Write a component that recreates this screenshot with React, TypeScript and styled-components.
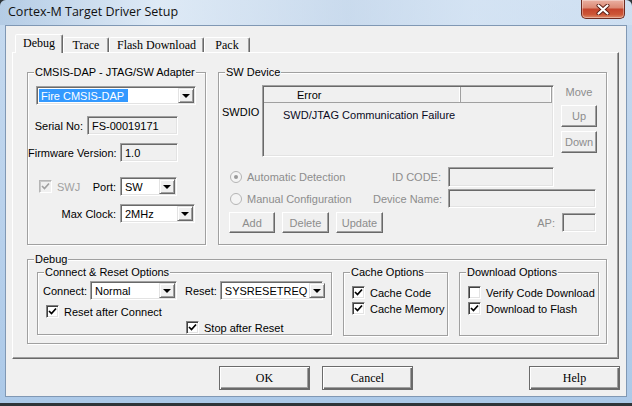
import React from 'react';
import styled, { createGlobalStyle } from 'styled-components';

const GlobalStyle = createGlobalStyle`
  html, body {
    margin: 0;
    padding: 0;
    background: #2f3539;
  }
  body {
    font-family: "Liberation Sans", Arial, sans-serif;
    font-size: 11px;
    color: #000;
  }
  * { box-sizing: border-box; }
`;

const Window = styled.div`
  width: 632px;
  height: 403px;
  display: flex;
  flex-direction: column;
  border-radius: 6px 6px 0 0;
  overflow: hidden;
  background: linear-gradient(180deg, #c6daef 0%, #bad2ec 50%, #acc9e8 100%);
`;

const TitleBar = styled.div`
  height: 25px;
  flex: none;
  display: flex;
  align-items: flex-start;
  padding-left: 8px;
  background: linear-gradient(90deg, rgba(150,180,212,0.35) 0%, rgba(230,239,248,0.75) 25%, rgba(204,219,236,0.6) 55%, rgba(218,231,245,0.7) 75%, rgba(255,255,255,0.15) 100%);
`;

const Title = styled.div`
  font-family: "Open Sans", "Liberation Sans", Arial, sans-serif;
  font-size: 12.5px;
  line-height: 16px;
  margin-top: 4px;
  color: #111;
`;

const CloseButton = styled.div`
  margin-left: auto;
  margin-right: 7px;
  width: 44px;
  height: 19px;
  border: 1px solid #6e2b21;
  border-top: none;
  border-radius: 0 0 5px 5px;
  background: linear-gradient(180deg, #eab0a2 0%, #dc8a75 42%, #c5452d 52%, #cc5637 80%, #de8a6a 100%);
  box-shadow: inset 0 0 0 1px rgba(255,255,255,0.35);
  display: flex;
  align-items: center;
  justify-content: center;
`;

const Client = styled.div`
  flex: none;
  height: 372px;
  margin: 0 5px;
  background: #f0f0f0;
  border: 1px solid #8098b4;
  display: flex;
  flex-direction: column;
`;

const TabStrip = styled.div`
  margin-top: 8px;
  padding-left: 9px;
  height: 18px;
  display: flex;
  align-items: flex-end;
  position: relative;
  z-index: 1;
`;

const Tab = styled.div<{ $active?: boolean }>`
  font-family: "Liberation Serif", "Times New Roman", serif;
  font-size: 12px;
  min-width: ${p => (p.$active ? 48 : 46)}px;
  height: ${p => (p.$active ? 19 : 15)}px;
  margin-bottom: ${p => (p.$active ? -1 : 0)}px;
  padding: ${p => (p.$active ? '0 7px 2px' : '0 7px')};
  display: flex;
  align-items: center;
  justify-content: center;
  background: #f0f0f0;
  border: 1px solid;
  border-bottom: none;
  border-color: #fff #696969 transparent #fff;
  box-shadow: inset -1px 0 #a0a0a0;
  border-radius: 2px 2px 0 0;
`;

const TabPanel = styled.div`
  margin: 0 7px 0 6px;
  height: 307px;
  border: 1px solid;
  border-color: #fff #696969 #696969 #fff;
  box-shadow: inset -1px -1px #a0a0a0;
  padding: 13px 0 0 14px;
  display: flex;
  flex-direction: column;
  gap: 8px;
`;

const TopRow = styled.div`
  display: flex;
  gap: 12px;
`;

const GroupBox = styled.fieldset<{ $w: number; $h: number }>`
  margin: 0;
  padding: 0;
  min-width: 0;
  flex: none;
  width: ${p => p.$w}px;
  height: ${p => p.$h}px;
  border: 1px solid #a0a0a0;
  box-shadow: 1px 1px 0 #fff, inset 1px 1px 0 #fff;
`;

const Legend = styled.legend`
  margin-left: 6px;
  padding: 0 1px;
  line-height: 13px;
  font-size: 11px;
  background: #f0f0f0;
`;

const Row = styled.div<{ $mt?: number; $pl?: number; $gap?: number; $top?: boolean }>`
  display: flex;
  align-items: ${p => (p.$top ? 'flex-start' : 'center')};
  margin-top: ${p => p.$mt ?? 0}px;
  padding-left: ${p => p.$pl ?? 0}px;
  gap: ${p => p.$gap ?? 0}px;
`;

const Label = styled.span<{ $w?: number; $dim?: boolean; $ml?: number }>`
  flex: none;
  width: ${p => (p.$w ? `${p.$w}px` : 'auto')};
  margin-left: ${p => p.$ml ?? 0}px;
  text-align: right;
  white-space: nowrap;
  color: ${p => (p.$dim ? '#8d8d8d' : '#000')};
`;

const Field = styled.div<{ $w: number; $h?: number; $white?: boolean; $ml?: number }>`
  flex: none;
  width: ${p => p.$w}px;
  height: ${p => p.$h ?? 19}px;
  margin-left: ${p => p.$ml ?? 0}px;
  padding: 1px;
  display: flex;
  align-items: stretch;
  background: ${p => (p.$white ? '#fff' : '#f0f0f0')};
  border: 1px solid;
  border-color: #a0a0a0 #fff #fff #a0a0a0;
  box-shadow: inset 1px 1px 0 #696969, inset -1px -1px 0 #e3e3e3;
`;

const Value = styled.span<{ $hl?: boolean }>`
  display: flex;
  align-items: center;
  padding: ${p => (p.$hl ? '0 4px 0 2px' : '0 2px')};
  margin: 1px 0 1px 1px;
  white-space: nowrap;
  background: ${p => (p.$hl ? '#3399ff' : 'transparent')};
  color: ${p => (p.$hl ? '#fff' : '#000')};
`;

const DropButton = styled.span`
  margin-left: auto;
  width: 16px;
  flex: none;
  background: #f0f0f0;
  border: 1px solid;
  border-color: #e3e3e3 #696969 #696969 #e3e3e3;
  box-shadow: inset 1px 1px 0 #fff, inset -1px -1px 0 #a0a0a0;
  display: flex;
  align-items: center;
  justify-content: center;
  &::after {
    content: '';
    border-left: 4px solid transparent;
    border-right: 4px solid transparent;
    border-top: 4px solid #000;
    margin-top: 1px;
  }
`;

const Box = styled.span<{ $disabled?: boolean }>`
  width: 13px;
  height: 13px;
  flex: none;
  background: ${p => (p.$disabled ? '#f0f0f0' : '#fff')};
  border: 1px solid;
  border-color: ${p => (p.$disabled ? '#b5b5b5 #fff #fff #b5b5b5' : '#808080 #fff #fff #808080')};
  box-shadow: ${p => (p.$disabled ? 'inset 1px 1px 0 #c8c8c8' : 'inset 1px 1px 0 #404040, inset -1px -1px 0 #e3e3e3')};
  display: flex;
  align-items: center;
  justify-content: center;
`;

const CheckRow = styled.label<{ $mt?: number; $pl?: number }>`
  display: flex;
  align-items: center;
  gap: 5px;
  height: 13px;
  margin-top: ${p => p.$mt ?? 0}px;
  padding-left: ${p => p.$pl ?? 0}px;
  white-space: nowrap;
`;

const SwjCell = styled.div`
  width: 88px;
  flex: none;
  display: flex;
  align-items: center;
  padding-left: 11px;
  gap: 5px;
  color: #a0a0a0;
  & > :last-child {
    margin-left: auto;
  }
`;

const SubRow = styled.div`
  display: flex;
  gap: 11px;
  margin-left: 9px;
`;

const SwdioLabel = styled.div`
  width: 43px;
  flex: none;
  padding: 21px 0 0 3px;
`;

const ListBox = styled.div`
  width: 292px;
  height: 72px;
  flex: none;
  border: 1px solid;
  border-color: #a0a0a0 #fff #fff #a0a0a0;
  box-shadow: inset 1px 1px 0 #696969, inset -1px -1px 0 #e3e3e3;
  padding: 1px;
  background: #f0f0f0;
`;

const ListHeader = styled.div`
  display: flex;
  height: 16px;
  border-bottom: 1px solid #a0a0a0;
`;

const HeaderCell = styled.div<{ $w: number; $pl?: number }>`
  width: ${p => p.$w}px;
  padding-left: ${p => p.$pl ?? 0}px;
  display: flex;
  align-items: center;
  border-right: 1px solid #a0a0a0;
  box-shadow: inset -1px 0 0 #fff;
`;

const ListItem = styled.div`
  margin-top: 6px;
  padding-left: 19px;
  line-height: 13px;
  color: #0a0a1e;
`;

const MoveColumn = styled.div`
  width: 36px;
  margin-left: 7px;
  flex: none;
  display: flex;
  flex-direction: column;
  gap: 4px;
`;

const MoveText = styled.div`
  height: 14px;
  line-height: 14px;
  text-align: center;
  color: #8d8d8d;
  margin-bottom: 2px;
`;

const SmallButton = styled.div<{ $w: number; $h?: number }>`
  width: ${p => p.$w}px;
  height: ${p => p.$h ?? 22}px;
  flex: none;
  display: flex;
  align-items: center;
  justify-content: center;
  color: #8d8d8d;
  background: #f0f0f0;
  border: 1px solid;
  border-color: #fff #696969 #696969 #fff;
  box-shadow: inset -1px -1px 0 #a0a0a0;
`;

const RadioCell = styled.div`
  width: 143px;
  flex: none;
  display: flex;
  align-items: center;
  gap: 5px;
  color: #8d8d8d;
  white-space: nowrap;
`;

const ButtonGroup = styled.div`
  width: 154px;
  flex: none;
  display: flex;
  gap: 7px;
`;

const ButtonRow = styled.div`
  margin-top: 7px;
  padding-left: 213px;
  display: flex;
  gap: 12px;
`;

const DialogButton = styled.div<{ $push?: boolean }>`
  width: 91px;
  height: 24px;
  margin-left: ${p => (p.$push ? 'auto' : '0')};
  margin-right: ${p => (p.$push ? '6px' : '0')};
  display: flex;
  align-items: center;
  justify-content: center;
  font-family: "Liberation Serif", "Times New Roman", serif;
  font-size: 12px;
  background: #f0f0f0;
  border: 1px solid #6b6b6b;
  box-shadow: inset 1px 1px 0 #fff, inset -1px -1px 0 #696969, inset -2px -2px 0 #a0a0a0;
`;

const CheckBox = ({ checked, disabled }: { checked?: boolean; disabled?: boolean }) => (
  <Box $disabled={disabled}>
    {checked && (
      <svg width="9" height="9" viewBox="0 0 9 9">
        <polyline points="1,4 3.5,6.5 8,1.5" fill="none" stroke={disabled ? '#a0a0a0' : '#000'} strokeWidth="1.7" />
      </svg>
    )}
  </Box>
);

const Radio = ({ selected }: { selected?: boolean }) => (
  <svg width="12" height="12" viewBox="0 0 12 12">
    <circle cx="6" cy="6" r="5.5" fill="#f4f4f4" stroke="#b4b4b4" />
    {selected && <circle cx="6" cy="6" r="2" fill="#9a9a9a" />}
  </svg>
);

const Select = ({ w, value, hl }: { w: number; value: string; hl?: boolean }) => (
  <Field $w={w} $white>
    <Value $hl={hl}>{value}</Value>
    <DropButton />
  </Field>
);

export default function App() {
  return (
    <>
      <GlobalStyle />
      <Window>
        <TitleBar>
          <Title>Cortex-M Target Driver Setup</Title>
          <CloseButton>
            <svg width="14" height="11" viewBox="0 0 14 11">
              <path d="M2.5 1.5 L11.5 9.5 M11.5 1.5 L2.5 9.5" stroke="#5a1d14" strokeWidth="4" strokeLinecap="round" />
              <path d="M2.5 1.5 L11.5 9.5 M11.5 1.5 L2.5 9.5" stroke="#fff" strokeWidth="2.2" strokeLinecap="round" />
            </svg>
          </CloseButton>
        </TitleBar>
        <Client>
          <TabStrip>
            <Tab $active>Debug</Tab>
            <Tab>Trace</Tab>
            <Tab>Flash Download</Tab>
            <Tab>Pack</Tab>
          </TabStrip>
          <TabPanel>
            <TopRow>
              <GroupBox $w={179} $h={179}>
                <Legend>CMSIS-DAP - JTAG/SW Adapter</Legend>
                <Row $mt={7} $pl={8}>
                  <Select w={160} value="Fire CMSIS-DAP" hl />
                </Row>
                <Row $mt={11} $gap={4}>
                  <Label $w={55}>Serial No:</Label>
                  <Field $w={91}><Value>FS-00019171</Value></Field>
                </Row>
                <Row $mt={8} $gap={4}>
                  <Label $w={88}>Firmware Version:</Label>
                  <Field $w={58}><Value>1.0</Value></Field>
                </Row>
                <Row $mt={15} $gap={4}>
                  <SwjCell>
                    <CheckBox checked disabled />
                    <span>SWJ</span>
                    <Label>Port:</Label>
                  </SwjCell>
                  <Select w={57} value="SW" />
                </Row>
                <Row $mt={8} $gap={4}>
                  <Label $w={88}>Max Clock:</Label>
                  <Select w={75} value="2MHz" />
                </Row>
              </GroupBox>

              <GroupBox $w={389} $h={179}>
                <Legend>SW Device</Legend>
                <Row $mt={6} $top>
                  <SwdioLabel>SWDIO</SwdioLabel>
                  <ListBox>
                    <ListHeader>
                      <HeaderCell $w={198} $pl={33}>Error</HeaderCell>
                      <HeaderCell $w={92} />
                    </ListHeader>
                    <ListItem>SWD/JTAG Communication Failure</ListItem>
                  </ListBox>
                  <MoveColumn>
                    <MoveText>Move</MoveText>
                    <SmallButton $w={36}>Up</SmallButton>
                    <SmallButton $w={36}>Down</SmallButton>
                  </MoveColumn>
                </Row>
                <Row $mt={10} $pl={11}>
                  <RadioCell><Radio selected />Automatic Detection</RadioCell>
                  <Label $w={68} $dim>ID CODE:</Label>
                  <Field $w={106} $h={20} $ml={7} />
                </Row>
                <Row $mt={2} $pl={11}>
                  <RadioCell><Radio />Manual Configuration</RadioCell>
                  <Label $w={68} $dim>Device Name:</Label>
                  <Field $w={148} $ml={7} />
                </Row>
                <Row $mt={4} $pl={10}>
                  <ButtonGroup>
                    <SmallButton $w={46} $h={21}>Add</SmallButton>
                    <SmallButton $w={47} $h={21}>Delete</SmallButton>
                    <SmallButton $w={47} $h={21}>Update</SmallButton>
                  </ButtonGroup>
                  <Label $w={172} $dim>AP:</Label>
                  <Field $w={34} $ml={7} />
                </Row>
              </GroupBox>
            </TopRow>

            <GroupBox $w={580} $h={91}>
              <Legend>Debug</Legend>
              <SubRow>
                <GroupBox $w={295} $h={69}>
                  <Legend>Connect &amp; Reset Options</Legend>
                  <Row $mt={2} $pl={5}>
                    <Label>Connect:</Label>
                    <Field $w={87} $white $ml={3}>
                      <Value>Normal</Value>
                      <DropButton />
                    </Field>
                    <Label $ml={8}>Reset:</Label>
                    <Field $w={103} $white $ml={3}>
                      <Value>SYSRESETREQ</Value>
                      <DropButton />
                    </Field>
                  </Row>
                  <CheckRow $mt={5} $pl={8}>
                    <CheckBox checked />Reset after Connect
                  </CheckRow>
                  <CheckRow $mt={3} $pl={148}>
                    <CheckBox checked />Stop after Reset
                  </CheckRow>
                </GroupBox>
                <GroupBox $w={105} $h={70}>
                  <Legend>Cache Options</Legend>
                  <CheckRow $mt={7} $pl={8}>
                    <CheckBox checked />Cache Code
                  </CheckRow>
                  <CheckRow $mt={3} $pl={8}>
                    <CheckBox checked />Cache Memory
                  </CheckRow>
                </GroupBox>
                <GroupBox $w={140} $h={70}>
                  <Legend>Download Options</Legend>
                  <CheckRow $mt={7} $pl={8}>
                    <CheckBox />Verify Code Download
                  </CheckRow>
                  <CheckRow $mt={3} $pl={8}>
                    <CheckBox checked />Download to Flash
                  </CheckRow>
                </GroupBox>
              </SubRow>
            </GroupBox>
          </TabPanel>
          <ButtonRow>
            <DialogButton>OK</DialogButton>
            <DialogButton>Cancel</DialogButton>
            <DialogButton $push>Help</DialogButton>
          </ButtonRow>
        </Client>
      </Window>
    </>
  );
}
